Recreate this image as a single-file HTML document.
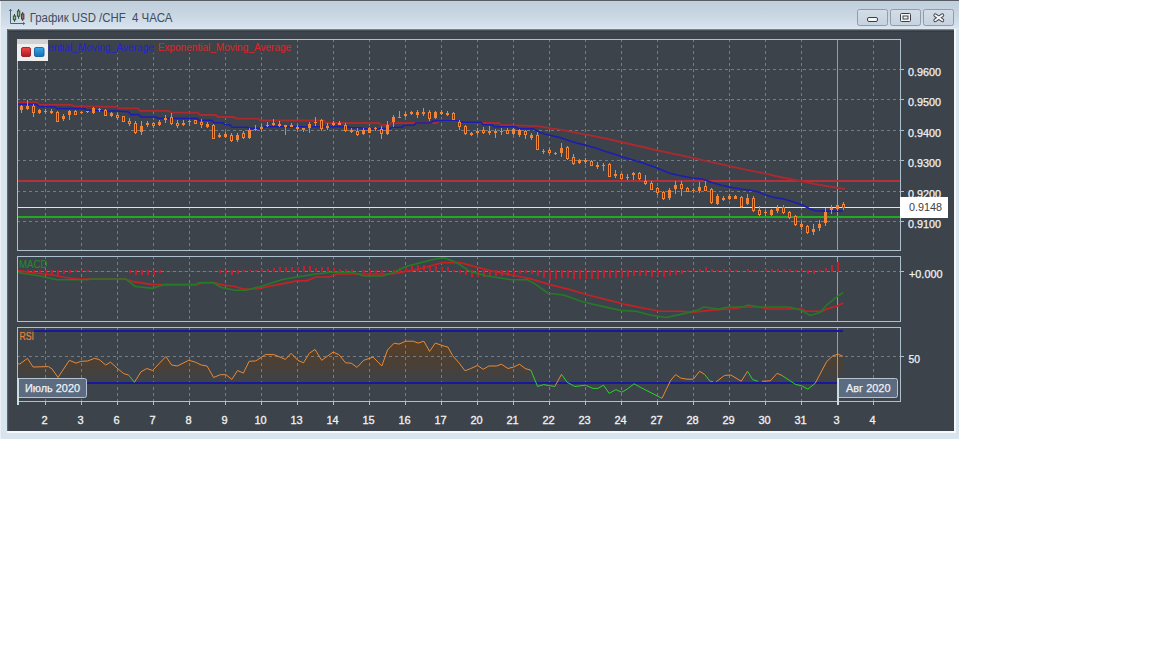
<!DOCTYPE html>
<html><head><meta charset="utf-8"><style>
html,body{margin:0;padding:0;background:#fff;width:1152px;height:648px;overflow:hidden}
svg{position:absolute;left:0;top:0}
text{font-family:"Liberation Sans",sans-serif}
</style></head><body>
<svg width="1152" height="648" viewBox="0 0 1152 648" shape-rendering="crispEdges">
<defs>
<linearGradient id="tb" x1="0" y1="0" x2="0" y2="1">
<stop offset="0" stop-color="#bfcedb"/><stop offset="0.5" stop-color="#c9d7e3"/><stop offset="0.93" stop-color="#d6e3ee"/><stop offset="1" stop-color="#dfe9f1"/>
</linearGradient>
<linearGradient id="btn" x1="0" y1="0" x2="0" y2="1">
<stop offset="0" stop-color="#d3dde7"/><stop offset="1" stop-color="#c6d2de"/>
</linearGradient>
<linearGradient id="rsifill" x1="0" y1="340" x2="0" y2="383" gradientUnits="userSpaceOnUse">
<stop offset="0" stop-color="#5a3e22"/><stop offset="0.55" stop-color="#4a4036"/><stop offset="1" stop-color="#3d4249"/>
</linearGradient>
<linearGradient id="redsq" x1="0" y1="0" x2="0" y2="1">
<stop offset="0" stop-color="#f04848"/><stop offset="1" stop-color="#b01820"/>
</linearGradient>
<linearGradient id="bluesq" x1="0" y1="0" x2="0" y2="1">
<stop offset="0" stop-color="#38a8e8"/><stop offset="1" stop-color="#1070b8"/>
</linearGradient>
<clipPath id="mainclip"><rect x="18" y="40" width="882" height="210"/></clipPath>
<clipPath id="macdclip"><rect x="18" y="257" width="882" height="64"/></clipPath>
<clipPath id="rsiclip"><rect x="18" y="328" width="882" height="73"/></clipPath>
</defs>

<rect x="0" y="0" width="959" height="439" fill="#d8e4ee"/>
<rect x="0" y="1" width="959" height="28" fill="url(#tb)"/>
<rect x="0" y="0" width="959" height="1" fill="#565c62"/>
<rect x="0" y="1" width="959" height="1" fill="#c8d1da"/>
<rect x="0" y="1" width="1" height="438" fill="#eaf0f5"/>
<rect x="7" y="429" width="949" height="4" fill="#f6f9fb"/>
<rect x="954" y="29" width="2" height="404" fill="#f6f9fb"/>
<rect x="7" y="29" width="947" height="402" fill="#3c434b"/>
<rect x="7" y="29" width="947" height="1" fill="#7c828a"/>
<rect x="7" y="30" width="947" height="1" fill="#4a5057"/>
<rect x="7" y="31" width="947" height="1" fill="#363b42"/>
<rect x="7" y="29" width="1" height="402" fill="#5e646c"/>
<rect x="8" y="30" width="1" height="401" fill="#42484f"/>
<g shape-rendering="geometricPrecision" fill="none" stroke="#4d6272" stroke-width="1">
<path d="M10.5 9.5 V23.5 H24.5"/><path d="M9.2 10.8 L10.5 9.3 L11.8 10.8"/><path d="M23.2 22.2 L24.7 23.5 L23.2 24.8"/>
</g>
<g shape-rendering="geometricPrecision" stroke-width="1">
<path d="M14.5 14 V21.8" stroke="#2f4a34"/><rect x="13.3" y="16" width="2.4" height="3.8" fill="#8ab88a" stroke="#2f4a34" stroke-width="0.9"/>
<path d="M18.6 9 V18.8" stroke="#2f4a34"/><rect x="17.4" y="11" width="2.4" height="5.2" fill="#8ab88a" stroke="#2f4a34" stroke-width="0.9"/>
<path d="M22.7 12 V21" stroke="#3e3238"/><rect x="21.5" y="14" width="2.4" height="5" fill="#a07070" stroke="#3e3238" stroke-width="0.9"/>
</g>
<text x="29.7" y="21.6" font-size="12" fill="#434c5c" textLength="96" lengthAdjust="spacingAndGlyphs">График USD /CHF</text>
<text x="132" y="21.6" font-size="12" fill="#434c5c" textLength="40.5" lengthAdjust="spacingAndGlyphs">4 ЧАСА</text>
<rect x="857.5" y="9.5" width="30" height="16" rx="2" ry="2" fill="url(#btn)" stroke="#8e9cab" stroke-width="1" shape-rendering="geometricPrecision"/>
<rect x="890.5" y="9.5" width="30" height="16" rx="2" ry="2" fill="url(#btn)" stroke="#8e9cab" stroke-width="1" shape-rendering="geometricPrecision"/>
<rect x="923.5" y="9.5" width="30" height="16" rx="2" ry="2" fill="url(#btn)" stroke="#8e9cab" stroke-width="1" shape-rendering="geometricPrecision"/>
<g shape-rendering="geometricPrecision">
<rect x="867.5" y="17.5" width="10" height="4" rx="1.5" fill="#f4f6f8" stroke="#3a3f45" stroke-width="1"/>
<rect x="900.5" y="13.5" width="10" height="8" rx="1" fill="#f4f6f8" stroke="#3a3f45" stroke-width="1"/>
<rect x="903" y="16" width="5" height="3" fill="none" stroke="#3a3f45" stroke-width="1"/>
<path d="M935.3 15.3 L942.3 20.3 M942.3 15.3 L935.3 20.3" stroke="#3a3f45" stroke-width="3.8" stroke-linecap="round"/>
<path d="M935.3 15.3 L942.3 20.3 M942.3 15.3 L935.3 20.3" stroke="#f4f6f8" stroke-width="2" stroke-linecap="round"/>
</g>
<line x1="45.5" y1="53" x2="45.5" y2="250" stroke="#737d88" stroke-width="1" stroke-dasharray="3 3" stroke-dashoffset="2"/>
<line x1="81.5" y1="53" x2="81.5" y2="250" stroke="#737d88" stroke-width="1" stroke-dasharray="3 3" stroke-dashoffset="2"/>
<line x1="117.5" y1="53" x2="117.5" y2="250" stroke="#737d88" stroke-width="1" stroke-dasharray="3 3" stroke-dashoffset="2"/>
<line x1="153.5" y1="53" x2="153.5" y2="250" stroke="#737d88" stroke-width="1" stroke-dasharray="3 3" stroke-dashoffset="2"/>
<line x1="189.5" y1="53" x2="189.5" y2="250" stroke="#737d88" stroke-width="1" stroke-dasharray="3 3" stroke-dashoffset="2"/>
<line x1="225.5" y1="53" x2="225.5" y2="250" stroke="#737d88" stroke-width="1" stroke-dasharray="3 3" stroke-dashoffset="2"/>
<line x1="261.5" y1="53" x2="261.5" y2="250" stroke="#737d88" stroke-width="1" stroke-dasharray="3 3" stroke-dashoffset="2"/>
<line x1="297.5" y1="39" x2="297.5" y2="250" stroke="#737d88" stroke-width="1" stroke-dasharray="3 3" stroke-dashoffset="0"/>
<line x1="333.5" y1="39" x2="333.5" y2="250" stroke="#737d88" stroke-width="1" stroke-dasharray="3 3" stroke-dashoffset="0"/>
<line x1="369.5" y1="39" x2="369.5" y2="250" stroke="#737d88" stroke-width="1" stroke-dasharray="3 3" stroke-dashoffset="0"/>
<line x1="405.5" y1="39" x2="405.5" y2="250" stroke="#737d88" stroke-width="1" stroke-dasharray="3 3" stroke-dashoffset="0"/>
<line x1="441.5" y1="39" x2="441.5" y2="250" stroke="#737d88" stroke-width="1" stroke-dasharray="3 3" stroke-dashoffset="0"/>
<line x1="477.5" y1="39" x2="477.5" y2="250" stroke="#737d88" stroke-width="1" stroke-dasharray="3 3" stroke-dashoffset="0"/>
<line x1="513.5" y1="39" x2="513.5" y2="250" stroke="#737d88" stroke-width="1" stroke-dasharray="3 3" stroke-dashoffset="0"/>
<line x1="549.5" y1="39" x2="549.5" y2="250" stroke="#737d88" stroke-width="1" stroke-dasharray="3 3" stroke-dashoffset="0"/>
<line x1="585.5" y1="39" x2="585.5" y2="250" stroke="#737d88" stroke-width="1" stroke-dasharray="3 3" stroke-dashoffset="0"/>
<line x1="621.5" y1="39" x2="621.5" y2="250" stroke="#737d88" stroke-width="1" stroke-dasharray="3 3" stroke-dashoffset="0"/>
<line x1="657.5" y1="39" x2="657.5" y2="250" stroke="#737d88" stroke-width="1" stroke-dasharray="3 3" stroke-dashoffset="0"/>
<line x1="693.5" y1="39" x2="693.5" y2="250" stroke="#737d88" stroke-width="1" stroke-dasharray="3 3" stroke-dashoffset="0"/>
<line x1="729.5" y1="39" x2="729.5" y2="250" stroke="#737d88" stroke-width="1" stroke-dasharray="3 3" stroke-dashoffset="0"/>
<line x1="765.5" y1="39" x2="765.5" y2="250" stroke="#737d88" stroke-width="1" stroke-dasharray="3 3" stroke-dashoffset="0"/>
<line x1="801.5" y1="39" x2="801.5" y2="250" stroke="#737d88" stroke-width="1" stroke-dasharray="3 3" stroke-dashoffset="0"/>
<line x1="837.5" y1="39" x2="837.5" y2="250" stroke="#737d88" stroke-width="1" stroke-dasharray="3 3" stroke-dashoffset="0"/>
<line x1="873.5" y1="39" x2="873.5" y2="250" stroke="#737d88" stroke-width="1" stroke-dasharray="3 3" stroke-dashoffset="0"/>
<line x1="17" y1="69.5" x2="900" y2="69.5" stroke="#737d88" stroke-width="1" stroke-dasharray="3 3"/>
<line x1="17" y1="99.5" x2="900" y2="99.5" stroke="#737d88" stroke-width="1" stroke-dasharray="3 3"/>
<line x1="17" y1="130.5" x2="900" y2="130.5" stroke="#737d88" stroke-width="1" stroke-dasharray="3 3"/>
<line x1="17" y1="160.5" x2="900" y2="160.5" stroke="#737d88" stroke-width="1" stroke-dasharray="3 3"/>
<line x1="17" y1="191.5" x2="900" y2="191.5" stroke="#737d88" stroke-width="1" stroke-dasharray="3 3"/>
<line x1="17" y1="221.5" x2="900" y2="221.5" stroke="#737d88" stroke-width="1" stroke-dasharray="3 3"/>
<line x1="837.5" y1="40" x2="837.5" y2="250" stroke="#8fa0b0" stroke-width="1"/>
<rect x="18" y="180" width="882" height="2" fill="#b4303a"/>
<rect x="18" y="216" width="882" height="2" fill="#22a822"/>
<rect x="18" y="207" width="882" height="1" fill="#e2e2e2"/>
<g clip-path="url(#mainclip)">
<polyline points="17,102.4 37,102.4 39,104.8 72,104.8 74,106.2 117,106.8 119,108.4 138,108.4 140,110.8 169,110.8 171,112.7 198,112.7 200,115 216,115 218,117 234,117 236,118.6 258,118.6 260,120.5 324,120.5 326,123 379,123 381,124.8 389,124.8 391,123 437,123 439,120.5 458,120.5 461,123 499,123 501,124.8 537,126.2 560,129.6 585,134.3 608,139 634,145 660,151 687,156.7 715,162.9 742,168.8 760,172.5 780,177 800,181 820,185 845,189" fill="none" stroke="#aa2a30" stroke-width="1.8" shape-rendering="geometricPrecision" />
<polyline points="17,104.3 37,104.3 39,106.7 55,106.7 57,108.6 84,108.6 86,110 120,111.2 128,111.7 131,114.6 139,114.6 141,117 156,117 158,118.4 197,118.4 199,120.3 212,120.3 214,122.7 223,122.7 225,124.8 230,124.8 232,127.2 247,127.2 249,128.2 263,128.2 265,126.7 348,126.7 350,127.7 361,127.7 363,128.7 390,128.7 392,127.2 402,127.2 404,125.3 414,125.3 416,123 431,123 433,121 440,120.5 458,120.5 462,122.4 481,122.4 483,124.8 492,124.8 494,126.7 516,126.7 518,128.7 533,128.7 540,132.4 549.5,135.3 559,137.2 568.7,140.5 578.2,143.4 587.8,145.8 597.3,148.5 604,151 610.7,153 616.3,154.8 622.8,157 629.3,159 635.7,160.8 642.2,162.7 648.7,165 657.4,168 668.9,173 678.4,175.3 690.8,177.7 702.3,179 711.9,182.5 721.4,185.3 731,187.2 740.5,189 750,190.3 757.6,191.7 765.3,195 773.9,197.4 783.4,199 793,201.7 802.5,205 809.2,208.4 815,210.8 824.5,211.1 842.6,211.1" fill="none" stroke="#1c1eb0" stroke-width="1.6" shape-rendering="geometricPrecision" />
<rect x="21" y="105.3" width="1" height="7.6" fill="#f0853a"/>
<rect x="20" y="106" width="3" height="4" fill="#f0853a"/>
<rect x="27" y="100" width="1" height="10" fill="#f0853a"/>
<rect x="26" y="105.8" width="3" height="3.2" fill="#f0853a"/>
<rect x="33" y="104.3" width="1" height="12.9" fill="#f0853a"/>
<rect x="32" y="105.8" width="3" height="7.6" fill="#f0853a"/>
<rect x="33" y="106.8" width="1" height="5.6" fill="#6e2e18"/>
<rect x="39" y="109" width="1" height="5" fill="#f0853a"/>
<rect x="38" y="110" width="3" height="3" fill="#f0853a"/>
<rect x="45" y="109" width="1" height="5" fill="#f0853a"/>
<rect x="44" y="111" width="3" height="1" fill="#f0853a"/>
<rect x="51" y="109" width="1" height="5" fill="#f0853a"/>
<rect x="50" y="110.5" width="3" height="2.5" fill="#f0853a"/>
<rect x="57" y="110.5" width="1" height="11.5" fill="#f0853a"/>
<rect x="56" y="112" width="3" height="9.5" fill="#f0853a"/>
<rect x="57" y="113" width="1" height="7.5" fill="#6e2e18"/>
<rect x="63" y="114" width="1" height="7" fill="#f0853a"/>
<rect x="62" y="116" width="3" height="3" fill="#f0853a"/>
<rect x="69" y="110" width="1" height="10" fill="#f0853a"/>
<rect x="68" y="110.5" width="3" height="4.3" fill="#f0853a"/>
<rect x="75" y="110" width="1" height="4.8" fill="#f0853a"/>
<rect x="74" y="110.5" width="3" height="4" fill="#f0853a"/>
<rect x="75" y="111.5" width="1" height="2" fill="#6e2e18"/>
<rect x="81" y="110.5" width="1" height="3.5" fill="#f0853a"/>
<rect x="80" y="111.5" width="3" height="1.5" fill="#f0853a"/>
<rect x="87" y="110.5" width="1" height="2.9" fill="#f0853a"/>
<rect x="86" y="111" width="3" height="1" fill="#f0853a"/>
<rect x="93" y="107" width="1" height="7" fill="#f0853a"/>
<rect x="92" y="108" width="3" height="5" fill="#f0853a"/>
<rect x="99" y="107.7" width="1" height="4.3" fill="#f0853a"/>
<rect x="98" y="108.5" width="3" height="1.5" fill="#f0853a"/>
<rect x="105" y="109" width="1" height="7" fill="#f0853a"/>
<rect x="104" y="109.5" width="3" height="6" fill="#f0853a"/>
<rect x="105" y="110.5" width="1" height="4" fill="#6e2e18"/>
<rect x="111" y="112.4" width="1" height="4.3" fill="#f0853a"/>
<rect x="110" y="113" width="3" height="3" fill="#f0853a"/>
<rect x="117" y="113.4" width="1" height="6.2" fill="#f0853a"/>
<rect x="116" y="114.5" width="3" height="3" fill="#f0853a"/>
<rect x="117" y="115.5" width="1" height="1" fill="#6e2e18"/>
<rect x="123" y="115.5" width="1" height="6.5" fill="#f0853a"/>
<rect x="122" y="115.5" width="3" height="6.2" fill="#f0853a"/>
<rect x="123" y="116.5" width="1" height="4.2" fill="#6e2e18"/>
<rect x="129" y="118" width="1" height="7.6" fill="#f0853a"/>
<rect x="128" y="121" width="3" height="2.6" fill="#f0853a"/>
<rect x="129" y="122" width="1" height="0.6" fill="#6e2e18"/>
<rect x="135" y="120.8" width="1" height="12.9" fill="#f0853a"/>
<rect x="134" y="122.7" width="3" height="10.5" fill="#f0853a"/>
<rect x="135" y="123.7" width="1" height="8.5" fill="#6e2e18"/>
<rect x="141" y="120.8" width="1" height="13.8" fill="#f0853a"/>
<rect x="140" y="126" width="3" height="5.8" fill="#f0853a"/>
<rect x="147" y="120.8" width="1" height="6.2" fill="#f0853a"/>
<rect x="146" y="123" width="3" height="2" fill="#f0853a"/>
<rect x="153" y="121.7" width="1" height="5.8" fill="#f0853a"/>
<rect x="152" y="123" width="3" height="3" fill="#f0853a"/>
<rect x="153" y="124" width="1" height="1" fill="#6e2e18"/>
<rect x="159" y="120.3" width="1" height="5.7" fill="#f0853a"/>
<rect x="158" y="122" width="3" height="2.5" fill="#f0853a"/>
<rect x="165" y="115" width="1" height="7.7" fill="#f0853a"/>
<rect x="164" y="117.5" width="3" height="2.5" fill="#f0853a"/>
<rect x="171" y="113" width="1" height="11.6" fill="#f0853a"/>
<rect x="170" y="117.4" width="3" height="6.6" fill="#f0853a"/>
<rect x="171" y="118.4" width="1" height="4.6" fill="#6e2e18"/>
<rect x="177" y="120.3" width="1" height="7.7" fill="#f0853a"/>
<rect x="176" y="122.7" width="3" height="3.3" fill="#f0853a"/>
<rect x="177" y="123.7" width="1" height="1.3" fill="#6e2e18"/>
<rect x="183" y="120.3" width="1" height="5.7" fill="#f0853a"/>
<rect x="182" y="123" width="3" height="1.5" fill="#f0853a"/>
<rect x="189" y="119.8" width="1" height="5.8" fill="#f0853a"/>
<rect x="188" y="120.5" width="3" height="1" fill="#f0853a"/>
<rect x="195" y="119.8" width="1" height="4.2" fill="#f0853a"/>
<rect x="194" y="120.3" width="3" height="3.2" fill="#f0853a"/>
<rect x="195" y="121.3" width="1" height="1.2" fill="#6e2e18"/>
<rect x="201" y="119.4" width="1" height="8.6" fill="#f0853a"/>
<rect x="200" y="122" width="3" height="3" fill="#f0853a"/>
<rect x="201" y="123" width="1" height="1" fill="#6e2e18"/>
<rect x="207" y="122.2" width="1" height="5.8" fill="#f0853a"/>
<rect x="206" y="123.5" width="3" height="3.5" fill="#f0853a"/>
<rect x="213" y="124" width="1" height="15" fill="#f0853a"/>
<rect x="212" y="124.6" width="3" height="13.9" fill="#f0853a"/>
<rect x="213" y="125.6" width="1" height="11.9" fill="#6e2e18"/>
<rect x="219" y="133" width="1" height="5" fill="#f0853a"/>
<rect x="218" y="134.6" width="3" height="2.4" fill="#f0853a"/>
<rect x="225" y="132" width="1" height="6" fill="#f0853a"/>
<rect x="224" y="133.7" width="3" height="2.8" fill="#f0853a"/>
<rect x="231" y="133" width="1" height="9" fill="#f0853a"/>
<rect x="230" y="135.3" width="3" height="5.3" fill="#f0853a"/>
<rect x="231" y="136.3" width="1" height="3.3" fill="#6e2e18"/>
<rect x="237" y="133" width="1" height="9" fill="#f0853a"/>
<rect x="236" y="134.9" width="3" height="5.1" fill="#f0853a"/>
<rect x="243" y="131" width="1" height="7.7" fill="#f0853a"/>
<rect x="242" y="133.4" width="3" height="4.8" fill="#f0853a"/>
<rect x="243" y="134.4" width="1" height="2.8" fill="#6e2e18"/>
<rect x="249" y="127.7" width="1" height="11.3" fill="#f0853a"/>
<rect x="248" y="129.6" width="3" height="8.1" fill="#f0853a"/>
<rect x="255" y="125.3" width="1" height="5.7" fill="#f0853a"/>
<rect x="254" y="128.5" width="3" height="1.5" fill="#f0853a"/>
<rect x="261" y="124.4" width="1" height="7.1" fill="#f0853a"/>
<rect x="260" y="127" width="3" height="1.7" fill="#f0853a"/>
<rect x="267" y="122" width="1" height="4.7" fill="#f0853a"/>
<rect x="266" y="124.5" width="3" height="1.5" fill="#f0853a"/>
<rect x="273" y="119" width="1" height="6.8" fill="#f0853a"/>
<rect x="272" y="122.5" width="3" height="2" fill="#f0853a"/>
<rect x="279" y="121" width="1" height="6.2" fill="#f0853a"/>
<rect x="278" y="123.5" width="3" height="2" fill="#f0853a"/>
<rect x="285" y="125.3" width="1" height="9.6" fill="#f0853a"/>
<rect x="284" y="125.3" width="3" height="1.4" fill="#f0853a"/>
<rect x="291" y="123.4" width="1" height="3.6" fill="#f0853a"/>
<rect x="290" y="125.3" width="3" height="1.4" fill="#f0853a"/>
<rect x="297" y="125.3" width="1" height="6.2" fill="#f0853a"/>
<rect x="296" y="127" width="3" height="1.5" fill="#f0853a"/>
<rect x="303" y="128" width="1" height="3.5" fill="#f0853a"/>
<rect x="302" y="128" width="3" height="1.5" fill="#f0853a"/>
<rect x="309" y="122.4" width="1" height="10.6" fill="#f0853a"/>
<rect x="308" y="124.4" width="3" height="3.6" fill="#f0853a"/>
<rect x="315" y="117" width="1" height="8.8" fill="#f0853a"/>
<rect x="314" y="121.5" width="3" height="1.5" fill="#f0853a"/>
<rect x="321" y="119" width="1" height="11.6" fill="#f0853a"/>
<rect x="320" y="119.6" width="3" height="9.1" fill="#f0853a"/>
<rect x="321" y="120.6" width="1" height="7.1" fill="#6e2e18"/>
<rect x="327" y="123" width="1" height="7" fill="#f0853a"/>
<rect x="326" y="126" width="3" height="2" fill="#f0853a"/>
<rect x="333" y="121" width="1" height="4.8" fill="#f0853a"/>
<rect x="332" y="123" width="3" height="2" fill="#f0853a"/>
<rect x="339" y="121" width="1" height="4" fill="#f0853a"/>
<rect x="338" y="122.5" width="3" height="2" fill="#f0853a"/>
<rect x="345" y="123" width="1" height="9" fill="#f0853a"/>
<rect x="344" y="124.8" width="3" height="6.2" fill="#f0853a"/>
<rect x="345" y="125.8" width="1" height="4.2" fill="#6e2e18"/>
<rect x="351" y="127.7" width="1" height="5.3" fill="#f0853a"/>
<rect x="350" y="129.5" width="3" height="2" fill="#f0853a"/>
<rect x="357" y="128" width="1" height="8.3" fill="#f0853a"/>
<rect x="356" y="130.6" width="3" height="4.7" fill="#f0853a"/>
<rect x="357" y="131.6" width="1" height="2.7" fill="#6e2e18"/>
<rect x="363" y="127.7" width="1" height="7.2" fill="#f0853a"/>
<rect x="362" y="129.6" width="3" height="4.4" fill="#f0853a"/>
<rect x="369" y="127" width="1" height="6" fill="#f0853a"/>
<rect x="368" y="128" width="3" height="4.5" fill="#f0853a"/>
<rect x="375" y="126.7" width="1" height="4.3" fill="#f0853a"/>
<rect x="374" y="127.5" width="3" height="1.5" fill="#f0853a"/>
<rect x="381" y="126" width="1" height="12.7" fill="#f0853a"/>
<rect x="380" y="128.7" width="3" height="5.3" fill="#f0853a"/>
<rect x="381" y="129.7" width="1" height="3.3" fill="#6e2e18"/>
<rect x="387" y="121" width="1" height="13.9" fill="#f0853a"/>
<rect x="386" y="124.8" width="3" height="9.2" fill="#f0853a"/>
<rect x="393" y="115.3" width="1" height="11.4" fill="#f0853a"/>
<rect x="392" y="116.7" width="3" height="5.7" fill="#f0853a"/>
<rect x="399" y="111" width="1" height="7" fill="#f0853a"/>
<rect x="398" y="116.5" width="3" height="1.5" fill="#f0853a"/>
<rect x="405" y="112" width="1" height="4.7" fill="#f0853a"/>
<rect x="404" y="114" width="3" height="1.5" fill="#f0853a"/>
<rect x="411" y="110.5" width="1" height="4.3" fill="#f0853a"/>
<rect x="410" y="111.5" width="3" height="2.5" fill="#f0853a"/>
<rect x="417" y="109.6" width="1" height="8.4" fill="#f0853a"/>
<rect x="416" y="112.4" width="3" height="2.9" fill="#f0853a"/>
<rect x="423" y="108" width="1" height="7.8" fill="#f0853a"/>
<rect x="422" y="112" width="3" height="2" fill="#f0853a"/>
<rect x="429" y="110" width="1" height="10.5" fill="#f0853a"/>
<rect x="428" y="111.5" width="3" height="7.5" fill="#f0853a"/>
<rect x="429" y="112.5" width="1" height="5.5" fill="#6e2e18"/>
<rect x="435" y="111" width="1" height="8" fill="#f0853a"/>
<rect x="434" y="112.4" width="3" height="5.6" fill="#f0853a"/>
<rect x="441" y="109.6" width="1" height="5.7" fill="#f0853a"/>
<rect x="440" y="111.5" width="3" height="2" fill="#f0853a"/>
<rect x="447" y="111" width="1" height="4.8" fill="#f0853a"/>
<rect x="446" y="112.5" width="3" height="2" fill="#f0853a"/>
<rect x="453" y="112" width="1" height="8" fill="#f0853a"/>
<rect x="452" y="113.4" width="3" height="6.2" fill="#f0853a"/>
<rect x="453" y="114.4" width="1" height="4.2" fill="#6e2e18"/>
<rect x="459" y="120" width="1" height="10" fill="#f0853a"/>
<rect x="458" y="122" width="3" height="5.2" fill="#f0853a"/>
<rect x="459" y="123" width="1" height="3.2" fill="#6e2e18"/>
<rect x="465" y="125.3" width="1" height="9.6" fill="#f0853a"/>
<rect x="464" y="126.3" width="3" height="7.7" fill="#f0853a"/>
<rect x="465" y="127.3" width="1" height="5.7" fill="#6e2e18"/>
<rect x="471" y="132" width="1" height="3.8" fill="#f0853a"/>
<rect x="470" y="133" width="3" height="1.5" fill="#f0853a"/>
<rect x="477" y="128" width="1" height="7.3" fill="#f0853a"/>
<rect x="476" y="130.5" width="3" height="2.5" fill="#f0853a"/>
<rect x="483" y="127.2" width="1" height="6.8" fill="#f0853a"/>
<rect x="482" y="130" width="3" height="3.4" fill="#f0853a"/>
<rect x="483" y="131" width="1" height="1.4" fill="#6e2e18"/>
<rect x="489" y="126.3" width="1" height="8.6" fill="#f0853a"/>
<rect x="488" y="130.5" width="3" height="2" fill="#f0853a"/>
<rect x="495" y="128.7" width="1" height="9" fill="#f0853a"/>
<rect x="494" y="130.5" width="3" height="2.5" fill="#f0853a"/>
<rect x="501" y="128" width="1" height="6.9" fill="#f0853a"/>
<rect x="500" y="130.5" width="3" height="1.5" fill="#f0853a"/>
<rect x="507" y="128" width="1" height="6" fill="#f0853a"/>
<rect x="506" y="129.5" width="3" height="4" fill="#f0853a"/>
<rect x="507" y="130.5" width="1" height="2" fill="#6e2e18"/>
<rect x="513" y="127.7" width="1" height="7.6" fill="#f0853a"/>
<rect x="512" y="128.5" width="3" height="5.5" fill="#f0853a"/>
<rect x="519" y="129" width="1" height="7.8" fill="#f0853a"/>
<rect x="518" y="130" width="3" height="5" fill="#f0853a"/>
<rect x="525" y="130" width="1" height="8.7" fill="#f0853a"/>
<rect x="524" y="131" width="3" height="3.5" fill="#f0853a"/>
<rect x="525" y="132" width="1" height="1.5" fill="#6e2e18"/>
<rect x="531" y="133" width="1" height="6.6" fill="#f0853a"/>
<rect x="530" y="134.5" width="3" height="3" fill="#f0853a"/>
<rect x="537" y="132" width="1" height="18" fill="#f0853a"/>
<rect x="536" y="134.9" width="3" height="14.6" fill="#f0853a"/>
<rect x="537" y="135.9" width="1" height="12.6" fill="#6e2e18"/>
<rect x="543" y="148.7" width="1" height="5.3" fill="#f0853a"/>
<rect x="542" y="151" width="3" height="1" fill="#f0853a"/>
<rect x="549" y="148" width="1" height="6" fill="#f0853a"/>
<rect x="548" y="150" width="3" height="3" fill="#f0853a"/>
<rect x="549" y="151" width="1" height="1" fill="#6e2e18"/>
<rect x="555" y="151.5" width="1" height="3.5" fill="#f0853a"/>
<rect x="554" y="152.5" width="3" height="1.5" fill="#f0853a"/>
<rect x="561" y="143" width="1" height="13.8" fill="#f0853a"/>
<rect x="560" y="147.7" width="3" height="5.3" fill="#f0853a"/>
<rect x="567" y="145.8" width="1" height="13.8" fill="#f0853a"/>
<rect x="566" y="146.7" width="3" height="12" fill="#f0853a"/>
<rect x="567" y="147.7" width="1" height="10" fill="#6e2e18"/>
<rect x="573" y="154" width="1" height="11" fill="#f0853a"/>
<rect x="572" y="156.8" width="3" height="7.2" fill="#f0853a"/>
<rect x="573" y="157.8" width="1" height="5.2" fill="#6e2e18"/>
<rect x="579" y="158.7" width="1" height="5.3" fill="#f0853a"/>
<rect x="578" y="159.5" width="3" height="3.5" fill="#f0853a"/>
<rect x="585" y="157.7" width="1" height="6.3" fill="#f0853a"/>
<rect x="584" y="160" width="3" height="2" fill="#f0853a"/>
<rect x="591" y="160" width="1" height="6.3" fill="#f0853a"/>
<rect x="590" y="160.5" width="3" height="5.5" fill="#f0853a"/>
<rect x="591" y="161.5" width="1" height="3.5" fill="#6e2e18"/>
<rect x="597" y="162" width="1" height="6.7" fill="#f0853a"/>
<rect x="596" y="164.5" width="3" height="2" fill="#f0853a"/>
<rect x="603" y="163" width="1" height="7.5" fill="#f0853a"/>
<rect x="602" y="164.5" width="3" height="1.5" fill="#f0853a"/>
<rect x="609" y="163" width="1" height="14" fill="#f0853a"/>
<rect x="608" y="163.6" width="3" height="13" fill="#f0853a"/>
<rect x="609" y="164.6" width="1" height="11" fill="#6e2e18"/>
<rect x="615" y="170" width="1" height="7.5" fill="#f0853a"/>
<rect x="614" y="174" width="3" height="1.5" fill="#f0853a"/>
<rect x="621" y="172.9" width="1" height="6.5" fill="#f0853a"/>
<rect x="620" y="173.5" width="3" height="5.5" fill="#f0853a"/>
<rect x="621" y="174.5" width="1" height="3.5" fill="#6e2e18"/>
<rect x="627" y="174" width="1" height="5.8" fill="#f0853a"/>
<rect x="626" y="176.5" width="3" height="1" fill="#f0853a"/>
<rect x="633" y="171.5" width="1" height="8.3" fill="#f0853a"/>
<rect x="632" y="173.3" width="3" height="1.7" fill="#f0853a"/>
<rect x="639" y="172" width="1" height="7.8" fill="#f0853a"/>
<rect x="638" y="172.5" width="3" height="6.8" fill="#f0853a"/>
<rect x="639" y="173.5" width="1" height="4.8" fill="#6e2e18"/>
<rect x="645" y="175" width="1" height="10.4" fill="#f0853a"/>
<rect x="644" y="180.7" width="3" height="2.8" fill="#f0853a"/>
<rect x="645" y="181.7" width="1" height="0.8" fill="#6e2e18"/>
<rect x="651" y="180.7" width="1" height="9.3" fill="#f0853a"/>
<rect x="650" y="183" width="3" height="6.6" fill="#f0853a"/>
<rect x="651" y="184" width="1" height="4.6" fill="#6e2e18"/>
<rect x="657" y="186.8" width="1" height="7.8" fill="#f0853a"/>
<rect x="656" y="187.7" width="3" height="5.3" fill="#f0853a"/>
<rect x="657" y="188.7" width="1" height="3.3" fill="#6e2e18"/>
<rect x="663" y="191" width="1" height="8.7" fill="#f0853a"/>
<rect x="662" y="192" width="3" height="7" fill="#f0853a"/>
<rect x="663" y="193" width="1" height="5" fill="#6e2e18"/>
<rect x="669" y="188" width="1" height="11.7" fill="#f0853a"/>
<rect x="668" y="190" width="3" height="7.8" fill="#f0853a"/>
<rect x="675" y="181" width="1" height="13" fill="#f0853a"/>
<rect x="674" y="184.9" width="3" height="3.8" fill="#f0853a"/>
<rect x="681" y="181" width="1" height="14.8" fill="#f0853a"/>
<rect x="680" y="184" width="3" height="4.7" fill="#f0853a"/>
<rect x="681" y="185" width="1" height="2.7" fill="#6e2e18"/>
<rect x="687" y="187" width="1" height="5" fill="#f0853a"/>
<rect x="686" y="188" width="3" height="3.5" fill="#f0853a"/>
<rect x="687" y="189" width="1" height="1.5" fill="#6e2e18"/>
<rect x="693" y="188" width="1" height="5" fill="#f0853a"/>
<rect x="692" y="190" width="3" height="1" fill="#f0853a"/>
<rect x="699" y="182" width="1" height="11" fill="#f0853a"/>
<rect x="698" y="186.8" width="3" height="3.8" fill="#f0853a"/>
<rect x="705" y="181" width="1" height="9.6" fill="#f0853a"/>
<rect x="704" y="185.8" width="3" height="4.8" fill="#f0853a"/>
<rect x="705" y="186.8" width="1" height="2.8" fill="#6e2e18"/>
<rect x="711" y="188" width="1" height="16" fill="#f0853a"/>
<rect x="710" y="189" width="3" height="14" fill="#f0853a"/>
<rect x="711" y="190" width="1" height="12" fill="#6e2e18"/>
<rect x="717" y="194.4" width="1" height="10.6" fill="#f0853a"/>
<rect x="716" y="196" width="3" height="8" fill="#f0853a"/>
<rect x="723" y="196" width="1" height="5" fill="#f0853a"/>
<rect x="722" y="198" width="3" height="2" fill="#f0853a"/>
<rect x="729" y="194.4" width="1" height="5.6" fill="#f0853a"/>
<rect x="728" y="195.5" width="3" height="3.5" fill="#f0853a"/>
<rect x="735" y="195" width="1" height="4" fill="#f0853a"/>
<rect x="734" y="196" width="3" height="2.5" fill="#f0853a"/>
<rect x="741" y="196" width="1" height="12" fill="#f0853a"/>
<rect x="740" y="197" width="3" height="10" fill="#f0853a"/>
<rect x="741" y="198" width="1" height="8" fill="#6e2e18"/>
<rect x="747" y="194.4" width="1" height="10.6" fill="#f0853a"/>
<rect x="746" y="198" width="3" height="6" fill="#f0853a"/>
<rect x="753" y="196" width="1" height="15.8" fill="#f0853a"/>
<rect x="752" y="198" width="3" height="13.3" fill="#f0853a"/>
<rect x="753" y="199" width="1" height="11.3" fill="#6e2e18"/>
<rect x="759" y="206" width="1" height="9.6" fill="#f0853a"/>
<rect x="758" y="209.9" width="3" height="4.7" fill="#f0853a"/>
<rect x="759" y="210.9" width="1" height="2.7" fill="#6e2e18"/>
<rect x="765" y="210" width="1" height="5.6" fill="#f0853a"/>
<rect x="764" y="212" width="3" height="1" fill="#f0853a"/>
<rect x="771" y="209" width="1" height="6.6" fill="#f0853a"/>
<rect x="770" y="210" width="3" height="5" fill="#f0853a"/>
<rect x="777" y="205" width="1" height="7.7" fill="#f0853a"/>
<rect x="776" y="208" width="3" height="3.3" fill="#f0853a"/>
<rect x="783" y="205" width="1" height="8.7" fill="#f0853a"/>
<rect x="782" y="207" width="3" height="6.2" fill="#f0853a"/>
<rect x="783" y="208" width="1" height="4.2" fill="#6e2e18"/>
<rect x="789" y="210.8" width="1" height="8.2" fill="#f0853a"/>
<rect x="788" y="211.8" width="3" height="5.7" fill="#f0853a"/>
<rect x="789" y="212.8" width="1" height="3.7" fill="#6e2e18"/>
<rect x="795" y="215" width="1" height="10.6" fill="#f0853a"/>
<rect x="794" y="216" width="3" height="9" fill="#f0853a"/>
<rect x="795" y="217" width="1" height="7" fill="#6e2e18"/>
<rect x="801" y="220.8" width="1" height="9.2" fill="#f0853a"/>
<rect x="800" y="223.7" width="3" height="3.3" fill="#f0853a"/>
<rect x="807" y="224.7" width="1" height="9" fill="#f0853a"/>
<rect x="806" y="225.5" width="3" height="7.5" fill="#f0853a"/>
<rect x="807" y="226.5" width="1" height="5.5" fill="#6e2e18"/>
<rect x="813" y="223.7" width="1" height="11.3" fill="#f0853a"/>
<rect x="812" y="229" width="3" height="3.3" fill="#f0853a"/>
<rect x="819" y="220" width="1" height="10.9" fill="#f0853a"/>
<rect x="818" y="223.7" width="3" height="4.3" fill="#f0853a"/>
<rect x="825" y="208" width="1" height="17.6" fill="#f0853a"/>
<rect x="824" y="212" width="3" height="10.8" fill="#f0853a"/>
<rect x="831" y="205" width="1" height="9" fill="#f0853a"/>
<rect x="830" y="207.5" width="3" height="2.8" fill="#f0853a"/>
<rect x="837" y="199.8" width="1" height="11" fill="#f0853a"/>
<rect x="836" y="204.6" width="3" height="4.8" fill="#f0853a"/>
<rect x="843" y="202" width="1" height="8" fill="#f0853a"/>
<rect x="842" y="204" width="3" height="4" fill="#f0853a"/>
<rect x="843" y="205" width="1" height="2" fill="#6e2e18"/>
</g>
<rect x="17.5" y="39.5" width="883" height="211" fill="none" stroke="#aebfce" stroke-width="1.2"/>
<rect x="900" y="69" width="4" height="1" fill="#aebfce"/>
<text x="908" y="76" font-size="10.5" fill="#f2f2f2" stroke="#f2f2f2" stroke-width="0.25" textLength="33" lengthAdjust="spacingAndGlyphs">0.9600</text>
<rect x="900" y="99" width="4" height="1" fill="#aebfce"/>
<text x="908" y="106" font-size="10.5" fill="#f2f2f2" stroke="#f2f2f2" stroke-width="0.25" textLength="33" lengthAdjust="spacingAndGlyphs">0.9500</text>
<rect x="900" y="130" width="4" height="1" fill="#aebfce"/>
<text x="908" y="137" font-size="10.5" fill="#f2f2f2" stroke="#f2f2f2" stroke-width="0.25" textLength="33" lengthAdjust="spacingAndGlyphs">0.9400</text>
<rect x="900" y="160" width="4" height="1" fill="#aebfce"/>
<text x="908" y="167" font-size="10.5" fill="#f2f2f2" stroke="#f2f2f2" stroke-width="0.25" textLength="33" lengthAdjust="spacingAndGlyphs">0.9300</text>
<rect x="900" y="191" width="4" height="1" fill="#aebfce"/>
<text x="908" y="198" font-size="10.5" fill="#f2f2f2" stroke="#f2f2f2" stroke-width="0.25" textLength="33" lengthAdjust="spacingAndGlyphs">0.9200</text>
<rect x="900" y="221" width="4" height="1" fill="#aebfce"/>
<text x="908" y="228" font-size="10.5" fill="#f2f2f2" stroke="#f2f2f2" stroke-width="0.25" textLength="33" lengthAdjust="spacingAndGlyphs">0.9100</text>
<rect x="900" y="197" width="48" height="21" fill="#ffffff"/>
<text x="909" y="211" font-size="11.5" fill="#3c4048" textLength="33" lengthAdjust="spacingAndGlyphs">0.9148</text>
<rect x="17" y="39" width="31" height="22" fill="#efefef"/>
<rect x="17" y="39" width="31" height="4.5" fill="#d2d2d2"/>
<rect x="21.5" y="47.5" width="9" height="9" rx="1.5" fill="url(#redsq)" stroke="#8a1018" stroke-width="0.8" shape-rendering="geometricPrecision"/>
<rect x="34.5" y="47.5" width="9.5" height="9" rx="1.5" fill="url(#bluesq)" stroke="#0a5090" stroke-width="0.8" shape-rendering="geometricPrecision"/>
<text x="48" y="51.4" font-size="11" fill="#2424cc" textLength="106" lengthAdjust="spacingAndGlyphs">ential_Moving_Average</text>
<text x="157.7" y="51.4" font-size="11" fill="#e02424" textLength="133.5" lengthAdjust="spacingAndGlyphs">Exponential_Moving_Average</text>
<line x1="45.5" y1="256" x2="45.5" y2="321" stroke="#737d88" stroke-width="1" stroke-dasharray="3 3" stroke-dashoffset="0"/>
<line x1="81.5" y1="256" x2="81.5" y2="321" stroke="#737d88" stroke-width="1" stroke-dasharray="3 3" stroke-dashoffset="0"/>
<line x1="117.5" y1="256" x2="117.5" y2="321" stroke="#737d88" stroke-width="1" stroke-dasharray="3 3" stroke-dashoffset="0"/>
<line x1="153.5" y1="256" x2="153.5" y2="321" stroke="#737d88" stroke-width="1" stroke-dasharray="3 3" stroke-dashoffset="0"/>
<line x1="189.5" y1="256" x2="189.5" y2="321" stroke="#737d88" stroke-width="1" stroke-dasharray="3 3" stroke-dashoffset="0"/>
<line x1="225.5" y1="256" x2="225.5" y2="321" stroke="#737d88" stroke-width="1" stroke-dasharray="3 3" stroke-dashoffset="0"/>
<line x1="261.5" y1="256" x2="261.5" y2="321" stroke="#737d88" stroke-width="1" stroke-dasharray="3 3" stroke-dashoffset="0"/>
<line x1="297.5" y1="256" x2="297.5" y2="321" stroke="#737d88" stroke-width="1" stroke-dasharray="3 3" stroke-dashoffset="0"/>
<line x1="333.5" y1="256" x2="333.5" y2="321" stroke="#737d88" stroke-width="1" stroke-dasharray="3 3" stroke-dashoffset="0"/>
<line x1="369.5" y1="256" x2="369.5" y2="321" stroke="#737d88" stroke-width="1" stroke-dasharray="3 3" stroke-dashoffset="0"/>
<line x1="405.5" y1="256" x2="405.5" y2="321" stroke="#737d88" stroke-width="1" stroke-dasharray="3 3" stroke-dashoffset="0"/>
<line x1="441.5" y1="256" x2="441.5" y2="321" stroke="#737d88" stroke-width="1" stroke-dasharray="3 3" stroke-dashoffset="0"/>
<line x1="477.5" y1="256" x2="477.5" y2="321" stroke="#737d88" stroke-width="1" stroke-dasharray="3 3" stroke-dashoffset="0"/>
<line x1="513.5" y1="256" x2="513.5" y2="321" stroke="#737d88" stroke-width="1" stroke-dasharray="3 3" stroke-dashoffset="0"/>
<line x1="549.5" y1="256" x2="549.5" y2="321" stroke="#737d88" stroke-width="1" stroke-dasharray="3 3" stroke-dashoffset="0"/>
<line x1="585.5" y1="256" x2="585.5" y2="321" stroke="#737d88" stroke-width="1" stroke-dasharray="3 3" stroke-dashoffset="0"/>
<line x1="621.5" y1="256" x2="621.5" y2="321" stroke="#737d88" stroke-width="1" stroke-dasharray="3 3" stroke-dashoffset="0"/>
<line x1="657.5" y1="256" x2="657.5" y2="321" stroke="#737d88" stroke-width="1" stroke-dasharray="3 3" stroke-dashoffset="0"/>
<line x1="693.5" y1="256" x2="693.5" y2="321" stroke="#737d88" stroke-width="1" stroke-dasharray="3 3" stroke-dashoffset="0"/>
<line x1="729.5" y1="256" x2="729.5" y2="321" stroke="#737d88" stroke-width="1" stroke-dasharray="3 3" stroke-dashoffset="0"/>
<line x1="765.5" y1="256" x2="765.5" y2="321" stroke="#737d88" stroke-width="1" stroke-dasharray="3 3" stroke-dashoffset="0"/>
<line x1="801.5" y1="256" x2="801.5" y2="321" stroke="#737d88" stroke-width="1" stroke-dasharray="3 3" stroke-dashoffset="0"/>
<line x1="837.5" y1="256" x2="837.5" y2="321" stroke="#737d88" stroke-width="1" stroke-dasharray="3 3" stroke-dashoffset="0"/>
<line x1="873.5" y1="256" x2="873.5" y2="321" stroke="#737d88" stroke-width="1" stroke-dasharray="3 3" stroke-dashoffset="0"/>
<line x1="17" y1="271.5" x2="900" y2="271.5" stroke="#737d88" stroke-width="1" stroke-dasharray="3 3"/>
<line x1="837.5" y1="257" x2="837.5" y2="321" stroke="#8fa0b0" stroke-width="1"/>
<g clip-path="url(#macdclip)">
<rect x="21" y="270" width="2" height="2.93" fill="#c02030"/>
<rect x="27" y="270" width="2" height="3.04" fill="#c02030"/>
<rect x="33" y="270" width="2" height="3.15" fill="#c02030"/>
<rect x="39" y="270" width="2" height="3.45" fill="#c02030"/>
<rect x="45" y="270" width="2" height="4.1" fill="#c02030"/>
<rect x="51" y="270" width="2" height="4.76" fill="#c02030"/>
<rect x="57" y="270" width="2" height="4.88" fill="#c02030"/>
<rect x="63" y="270" width="2" height="3.75" fill="#c02030"/>
<rect x="69" y="270" width="2" height="2.89" fill="#c02030"/>
<rect x="75" y="270" width="2" height="2.03" fill="#c02030"/>
<rect x="81" y="270" width="2" height="1.96" fill="#c02030"/>
<rect x="87" y="270" width="2" height="1.96" fill="#c02030"/>
<rect x="93" y="270.8" width="2" height="1.2" fill="#c02030"/>
<rect x="99" y="270.8" width="2" height="1.2" fill="#c02030"/>
<rect x="105" y="270.8" width="2" height="1.2" fill="#c02030"/>
<rect x="111" y="270.8" width="2" height="1.2" fill="#c02030"/>
<rect x="117" y="270.8" width="2" height="1.2" fill="#c02030"/>
<rect x="123" y="270.8" width="2" height="1.2" fill="#c02030"/>
<rect x="129" y="270" width="2" height="2.73" fill="#c02030"/>
<rect x="135" y="270" width="2" height="5.48" fill="#c02030"/>
<rect x="141" y="270" width="2" height="5.24" fill="#c02030"/>
<rect x="147" y="270" width="2" height="5.01" fill="#c02030"/>
<rect x="153" y="270" width="2" height="4.5" fill="#c02030"/>
<rect x="159" y="270" width="2" height="2.61" fill="#c02030"/>
<rect x="165" y="270.8" width="2" height="1.2" fill="#c02030"/>
<rect x="171" y="270.8" width="2" height="1.2" fill="#c02030"/>
<rect x="177" y="270.8" width="2" height="1.2" fill="#c02030"/>
<rect x="183" y="270.8" width="2" height="1.2" fill="#c02030"/>
<rect x="189" y="270.8" width="2" height="1.2" fill="#c02030"/>
<rect x="195" y="270.8" width="2" height="1.2" fill="#c02030"/>
<rect x="201" y="270.64" width="2" height="1.36" fill="#c02030"/>
<rect x="207" y="270.8" width="2" height="1.2" fill="#c02030"/>
<rect x="213" y="270.8" width="2" height="1.2" fill="#c02030"/>
<rect x="219" y="270" width="2" height="3.31" fill="#c02030"/>
<rect x="225" y="270" width="2" height="4.22" fill="#c02030"/>
<rect x="231" y="270" width="2" height="4.61" fill="#c02030"/>
<rect x="237" y="270" width="2" height="4.03" fill="#c02030"/>
<rect x="243" y="270" width="2" height="2.44" fill="#c02030"/>
<rect x="249" y="270" width="2" height="1.44" fill="#c02030"/>
<rect x="255" y="269.63" width="2" height="2.37" fill="#c02030"/>
<rect x="261" y="269.14" width="2" height="2.86" fill="#c02030"/>
<rect x="267" y="268.56" width="2" height="3.44" fill="#c02030"/>
<rect x="273" y="267.84" width="2" height="4.16" fill="#c02030"/>
<rect x="279" y="267.11" width="2" height="4.89" fill="#c02030"/>
<rect x="285" y="266.91" width="2" height="5.09" fill="#c02030"/>
<rect x="291" y="267.06" width="2" height="4.94" fill="#c02030"/>
<rect x="297" y="267.09" width="2" height="4.91" fill="#c02030"/>
<rect x="303" y="266.2" width="2" height="5.8" fill="#c02030"/>
<rect x="309" y="266.47" width="2" height="5.53" fill="#c02030"/>
<rect x="315" y="267.84" width="2" height="4.16" fill="#c02030"/>
<rect x="321" y="267.33" width="2" height="4.67" fill="#c02030"/>
<rect x="327" y="266.66" width="2" height="5.34" fill="#c02030"/>
<rect x="333" y="267.79" width="2" height="4.21" fill="#c02030"/>
<rect x="339" y="269.09" width="2" height="2.91" fill="#c02030"/>
<rect x="345" y="269.09" width="2" height="2.91" fill="#c02030"/>
<rect x="351" y="269.09" width="2" height="2.91" fill="#c02030"/>
<rect x="357" y="270.75" width="2" height="1.25" fill="#c02030"/>
<rect x="363" y="270" width="2" height="3.04" fill="#c02030"/>
<rect x="369" y="270" width="2" height="3.1" fill="#c02030"/>
<rect x="375" y="270" width="2" height="3.1" fill="#c02030"/>
<rect x="381" y="270" width="2" height="3.1" fill="#c02030"/>
<rect x="387" y="270" width="2" height="1.69" fill="#c02030"/>
<rect x="393" y="269.51" width="2" height="2.49" fill="#c02030"/>
<rect x="399" y="267.81" width="2" height="4.19" fill="#c02030"/>
<rect x="405" y="266.13" width="2" height="5.87" fill="#c02030"/>
<rect x="411" y="265.71" width="2" height="6.29" fill="#c02030"/>
<rect x="417" y="265.35" width="2" height="6.65" fill="#c02030"/>
<rect x="423" y="265.32" width="2" height="6.68" fill="#c02030"/>
<rect x="429" y="265.34" width="2" height="6.66" fill="#c02030"/>
<rect x="435" y="265.58" width="2" height="6.42" fill="#c02030"/>
<rect x="441" y="266.54" width="2" height="5.46" fill="#c02030"/>
<rect x="447" y="267.31" width="2" height="4.69" fill="#c02030"/>
<rect x="453" y="269.64" width="2" height="2.36" fill="#c02030"/>
<rect x="459" y="270" width="2" height="3.04" fill="#c02030"/>
<rect x="465" y="270" width="2" height="5.35" fill="#c02030"/>
<rect x="471" y="270" width="2" height="6.85" fill="#c02030"/>
<rect x="477" y="270" width="2" height="6.85" fill="#c02030"/>
<rect x="483" y="270" width="2" height="7.02" fill="#c02030"/>
<rect x="489" y="270" width="2" height="6.88" fill="#c02030"/>
<rect x="495" y="270" width="2" height="6.47" fill="#c02030"/>
<rect x="501" y="270" width="2" height="6.21" fill="#c02030"/>
<rect x="507" y="270" width="2" height="5.95" fill="#c02030"/>
<rect x="513" y="270" width="2" height="5.43" fill="#c02030"/>
<rect x="519" y="270" width="2" height="4.27" fill="#c02030"/>
<rect x="525" y="270" width="2" height="3.1" fill="#c02030"/>
<rect x="531" y="270" width="2" height="3.95" fill="#c02030"/>
<rect x="537" y="270" width="2" height="5.65" fill="#c02030"/>
<rect x="543" y="270" width="2" height="8.06" fill="#c02030"/>
<rect x="549" y="270" width="2" height="9.67" fill="#c02030"/>
<rect x="555" y="270" width="2" height="8.88" fill="#c02030"/>
<rect x="561" y="270" width="2" height="8.12" fill="#c02030"/>
<rect x="567" y="270" width="2" height="8.29" fill="#c02030"/>
<rect x="573" y="270" width="2" height="8.71" fill="#c02030"/>
<rect x="579" y="270" width="2" height="9.07" fill="#c02030"/>
<rect x="585" y="270" width="2" height="9.06" fill="#c02030"/>
<rect x="591" y="270" width="2" height="8.81" fill="#c02030"/>
<rect x="597" y="270" width="2" height="8.65" fill="#c02030"/>
<rect x="603" y="270" width="2" height="8.49" fill="#c02030"/>
<rect x="609" y="270" width="2" height="8.3" fill="#c02030"/>
<rect x="615" y="270" width="2" height="8.13" fill="#c02030"/>
<rect x="621" y="270" width="2" height="7.83" fill="#c02030"/>
<rect x="627" y="270" width="2" height="6.79" fill="#c02030"/>
<rect x="633" y="270" width="2" height="5.99" fill="#c02030"/>
<rect x="639" y="270" width="2" height="5.87" fill="#c02030"/>
<rect x="645" y="270" width="2" height="6.25" fill="#c02030"/>
<rect x="651" y="270" width="2" height="6.52" fill="#c02030"/>
<rect x="657" y="270" width="2" height="6.33" fill="#c02030"/>
<rect x="663" y="270" width="2" height="6.77" fill="#c02030"/>
<rect x="669" y="270" width="2" height="6.44" fill="#c02030"/>
<rect x="675" y="270" width="2" height="5.25" fill="#c02030"/>
<rect x="681" y="270" width="2" height="3.96" fill="#c02030"/>
<rect x="687" y="270" width="2" height="1.95" fill="#c02030"/>
<rect x="693" y="269.98" width="2" height="2.02" fill="#c02030"/>
<rect x="699" y="268.63" width="2" height="3.37" fill="#c02030"/>
<rect x="705" y="267.36" width="2" height="4.64" fill="#c02030"/>
<rect x="711" y="268.72" width="2" height="3.28" fill="#c02030"/>
<rect x="717" y="269.92" width="2" height="2.08" fill="#c02030"/>
<rect x="723" y="269.47" width="2" height="2.53" fill="#c02030"/>
<rect x="729" y="268.91" width="2" height="3.09" fill="#c02030"/>
<rect x="735" y="269.55" width="2" height="2.45" fill="#c02030"/>
<rect x="741" y="270.55" width="2" height="1.45" fill="#c02030"/>
<rect x="747" y="268.9" width="2" height="3.1" fill="#c02030"/>
<rect x="753" y="269.81" width="2" height="2.19" fill="#c02030"/>
<rect x="759" y="270.72" width="2" height="1.28" fill="#c02030"/>
<rect x="765" y="269.49" width="2" height="2.51" fill="#c02030"/>
<rect x="771" y="268.9" width="2" height="3.1" fill="#c02030"/>
<rect x="777" y="268.9" width="2" height="3.1" fill="#c02030"/>
<rect x="783" y="268.9" width="2" height="3.1" fill="#c02030"/>
<rect x="789" y="268.97" width="2" height="3.03" fill="#c02030"/>
<rect x="795" y="270.43" width="2" height="1.57" fill="#c02030"/>
<rect x="801" y="270" width="2" height="2.29" fill="#c02030"/>
<rect x="807" y="270" width="2" height="3.65" fill="#c02030"/>
<rect x="813" y="270" width="2" height="4.15" fill="#c02030"/>
<rect x="819" y="270" width="2" height="2.45" fill="#c02030"/>
<rect x="825" y="267.71" width="2" height="4.29" fill="#c02030"/>
<rect x="831" y="264.65" width="2" height="7.35" fill="#c02030"/>
<rect x="837" y="261.87" width="2" height="10.13" fill="#c02030"/>
<polyline points="15,270.3 34,273 53,275 62.7,277 76,279 125.8,279 133.4,281.7 152.5,284.6 196.4,284.6 202,282.7 213.6,282.7 221.3,284.6 234.6,286.5 243.4,289 256.7,289 268.2,286.5 283.5,283.6 296.8,280.8 306.4,280.8 316,277 329.3,277 337,274 392.3,274 401.9,272.2 417.2,269.3 428.6,266.5 442,262.6 460.3,262.6 477.5,267.4 492.7,271.2 511.8,275 530.9,278.9 550,284.6 569.1,289.4 588.2,295 607.3,299.9 626.4,304.7 645.5,308.5 660,311.25 680.8,311.25 691.25,312.3 712,310.2 733,308.75 743,307 760,307 768,309 801.7,309 805.8,311.25 822.5,311.25 826.7,309 837,306 843.3,303" fill="none" stroke="#c42226" stroke-width="1.7" shape-rendering="geometricPrecision" />
<polyline points="15,272 39.8,276 57,279.8 87.6,279.8 91.4,279 125.8,279 135.3,286.5 152.5,288.4 164,284.6 196.4,284.6 198.3,282.7 213.6,282.7 221.3,287.5 234.6,290.3 245.3,290.3 260.6,286.5 281.6,279.8 296.8,277 316,274 331.2,272.2 352.2,272.2 363.7,276 382.8,276 392.3,273 405.7,266.5 421,262.6 436.3,258.8 445,257.9 456.5,262.6 469.8,271.2 487,276 511.8,279.8 527.1,279.8 534.8,283.6 548.1,293.2 563.4,295 582.5,301.8 603.5,306.6 620.7,310.4 636,311.3 650,315 666,317.5 680.8,314.4 697.5,310.2 703.75,307 718.3,309 728.75,307 743.3,307 747.5,305 760,307 789.2,307 801.7,310.2 810,315.4 820.4,312.3 826.7,305 837,296.7 843.3,292.5" fill="none" stroke="#267a26" stroke-width="1.6" shape-rendering="geometricPrecision" />
</g>
<rect x="17.5" y="256.5" width="883" height="65" fill="none" stroke="#aebfce" stroke-width="1.2"/>
<rect x="900" y="271" width="4" height="1" fill="#aebfce"/>
<text x="909" y="278" font-size="10.5" fill="#f2f2f2" stroke="#f2f2f2" stroke-width="0.25" textLength="33.5" lengthAdjust="spacingAndGlyphs">+0.000</text>
<text x="19" y="267.5" font-size="11" fill="#2a8a2a" textLength="28.5" lengthAdjust="spacingAndGlyphs">MACD</text>
<g clip-path="url(#rsiclip)">
<path d="M15,383 L15,363.2 L19.8,364 L27.4,358.4 L33.1,367 L48.4,366.6 L52.2,369 L58,377.5 L69.4,360.3 L76.1,363.2 L80.9,361.3 L87.6,361 L94.3,358.4 L99,359.4 L105.7,365 L110.5,362.2 L118.1,369 L123.9,373.7 L128.6,375 L128.6,383 Z" fill="url(#rsifill)" shape-rendering="geometricPrecision"/>
<path d="M134.4,383 L134.4,382.3 L141,371.8 L146.8,368.5 L152.5,370.5 L165.9,356.5 L171.6,365 L177.3,366 L188.8,360.3 L195.5,362.2 L201.2,365 L207,366 L213.6,377.5 L220.3,374.7 L226,374.7 L231.8,379.4 L237.6,370.5 L243.4,373.1 L249.1,361.3 L255.8,360.9 L265.3,354.6 L273.9,354.6 L285.4,359.4 L291.1,353.3 L297.8,360.3 L303.5,362.8 L309.3,353.3 L315,349.4 L321.7,360.3 L333.1,352.1 L338.9,354.6 L345.5,362.8 L351.3,363.2 L357,367.4 L363.7,360.3 L373.2,357.1 L381.8,366 L387.6,349.8 L394.2,343.1 L399,344.1 L405.7,341.2 L413.3,341.2 L418.1,343.1 L423.9,341.2 L429.6,351.4 L435.3,343.1 L444.9,346.4 L447.9,347 L452.6,355.6 L459.3,363.2 L465,370.8 L470.8,368.5 L477.5,365.5 L483.2,369.3 L488.9,366 L496.6,366 L501.3,364.2 L508,368.5 L513.8,367 L519.5,364.2 L525.2,368.5 L530.9,370.3 L530.9,383 Z" fill="url(#rsifill)" shape-rendering="geometricPrecision"/>
<path d="M554.8,383 L554.8,383 L561.5,374.3 L561.5,383 Z" fill="url(#rsifill)" shape-rendering="geometricPrecision"/>
<path d="M662,383 L662,383 L670.4,380.8 L675.6,374.6 L680.8,378.1 L687,379.2 L693.3,379.2 L699.6,371.25 L704.8,374.6 L704.8,383 Z" fill="url(#rsifill)" shape-rendering="geometricPrecision"/>
<path d="M716.25,383 L716.25,381.7 L724.6,375.4 L730.8,375 L741.25,381.25 L747.5,371.25 L747.5,383 Z" fill="url(#rsifill)" shape-rendering="geometricPrecision"/>
<path d="M762,383 L762,381.25 L770.4,380.8 L777.1,373.3 L782,375.5 L782,383 Z" fill="url(#rsifill)" shape-rendering="geometricPrecision"/>
<path d="M815.2,383 L815.2,383 L826.7,361.5 L832.9,355.8 L838.1,354.2 L842.9,356.25 L842.9,383 Z" fill="url(#rsifill)" shape-rendering="geometricPrecision"/>
</g>
<line x1="45.5" y1="327" x2="45.5" y2="401" stroke="#737d88" stroke-width="1" stroke-dasharray="3 3" stroke-dashoffset="0"/>
<line x1="81.5" y1="327" x2="81.5" y2="401" stroke="#737d88" stroke-width="1" stroke-dasharray="3 3" stroke-dashoffset="0"/>
<line x1="117.5" y1="327" x2="117.5" y2="401" stroke="#737d88" stroke-width="1" stroke-dasharray="3 3" stroke-dashoffset="0"/>
<line x1="153.5" y1="327" x2="153.5" y2="401" stroke="#737d88" stroke-width="1" stroke-dasharray="3 3" stroke-dashoffset="0"/>
<line x1="189.5" y1="327" x2="189.5" y2="401" stroke="#737d88" stroke-width="1" stroke-dasharray="3 3" stroke-dashoffset="0"/>
<line x1="225.5" y1="327" x2="225.5" y2="401" stroke="#737d88" stroke-width="1" stroke-dasharray="3 3" stroke-dashoffset="0"/>
<line x1="261.5" y1="327" x2="261.5" y2="401" stroke="#737d88" stroke-width="1" stroke-dasharray="3 3" stroke-dashoffset="0"/>
<line x1="297.5" y1="327" x2="297.5" y2="401" stroke="#737d88" stroke-width="1" stroke-dasharray="3 3" stroke-dashoffset="0"/>
<line x1="333.5" y1="327" x2="333.5" y2="401" stroke="#737d88" stroke-width="1" stroke-dasharray="3 3" stroke-dashoffset="0"/>
<line x1="369.5" y1="327" x2="369.5" y2="401" stroke="#737d88" stroke-width="1" stroke-dasharray="3 3" stroke-dashoffset="0"/>
<line x1="405.5" y1="327" x2="405.5" y2="401" stroke="#737d88" stroke-width="1" stroke-dasharray="3 3" stroke-dashoffset="0"/>
<line x1="441.5" y1="327" x2="441.5" y2="401" stroke="#737d88" stroke-width="1" stroke-dasharray="3 3" stroke-dashoffset="0"/>
<line x1="477.5" y1="327" x2="477.5" y2="401" stroke="#737d88" stroke-width="1" stroke-dasharray="3 3" stroke-dashoffset="0"/>
<line x1="513.5" y1="327" x2="513.5" y2="401" stroke="#737d88" stroke-width="1" stroke-dasharray="3 3" stroke-dashoffset="0"/>
<line x1="549.5" y1="327" x2="549.5" y2="401" stroke="#737d88" stroke-width="1" stroke-dasharray="3 3" stroke-dashoffset="0"/>
<line x1="585.5" y1="327" x2="585.5" y2="401" stroke="#737d88" stroke-width="1" stroke-dasharray="3 3" stroke-dashoffset="0"/>
<line x1="621.5" y1="327" x2="621.5" y2="401" stroke="#737d88" stroke-width="1" stroke-dasharray="3 3" stroke-dashoffset="0"/>
<line x1="657.5" y1="327" x2="657.5" y2="401" stroke="#737d88" stroke-width="1" stroke-dasharray="3 3" stroke-dashoffset="0"/>
<line x1="693.5" y1="327" x2="693.5" y2="401" stroke="#737d88" stroke-width="1" stroke-dasharray="3 3" stroke-dashoffset="0"/>
<line x1="729.5" y1="327" x2="729.5" y2="401" stroke="#737d88" stroke-width="1" stroke-dasharray="3 3" stroke-dashoffset="0"/>
<line x1="765.5" y1="327" x2="765.5" y2="401" stroke="#737d88" stroke-width="1" stroke-dasharray="3 3" stroke-dashoffset="0"/>
<line x1="801.5" y1="327" x2="801.5" y2="401" stroke="#737d88" stroke-width="1" stroke-dasharray="3 3" stroke-dashoffset="0"/>
<line x1="837.5" y1="327" x2="837.5" y2="401" stroke="#737d88" stroke-width="1" stroke-dasharray="3 3" stroke-dashoffset="0"/>
<line x1="873.5" y1="327" x2="873.5" y2="401" stroke="#737d88" stroke-width="1" stroke-dasharray="3 3" stroke-dashoffset="0"/>
<line x1="17" y1="356.5" x2="900" y2="356.5" stroke="#737d88" stroke-width="1" stroke-dasharray="3 3"/>
<line x1="837.5" y1="328" x2="837.5" y2="401" stroke="#8fa0b0" stroke-width="1"/>
<rect x="34" y="330" width="809" height="2" fill="#17199a"/>
<rect x="18" y="382" width="825" height="2" fill="#17199a"/>
<g clip-path="url(#rsiclip)">
<polyline points="15,363.2 19.8,364 27.4,358.4 33.1,367 48.4,366.6 52.2,369 58,377.5 69.4,360.3 76.1,363.2 80.9,361.3 87.6,361 94.3,358.4 99,359.4 105.7,365 110.5,362.2 118.1,369 123.9,373.7 128.6,375" fill="none" stroke="#e88a38" stroke-width="1.0" shape-rendering="geometricPrecision" />
<polyline points="128.6,375 134.4,382.3" fill="none" stroke="#30d030" stroke-width="1.0" shape-rendering="geometricPrecision" />
<polyline points="134.4,382.3 141,371.8 146.8,368.5 152.5,370.5 165.9,356.5 171.6,365 177.3,366 188.8,360.3 195.5,362.2 201.2,365 207,366 213.6,377.5 220.3,374.7 226,374.7 231.8,379.4 237.6,370.5 243.4,373.1 249.1,361.3 255.8,360.9 265.3,354.6 273.9,354.6 285.4,359.4 291.1,353.3 297.8,360.3 303.5,362.8 309.3,353.3 315,349.4 321.7,360.3 333.1,352.1 338.9,354.6 345.5,362.8 351.3,363.2 357,367.4 363.7,360.3 373.2,357.1 381.8,366 387.6,349.8 394.2,343.1 399,344.1 405.7,341.2 413.3,341.2 418.1,343.1 423.9,341.2 429.6,351.4 435.3,343.1 444.9,346.4 447.9,347 452.6,355.6 459.3,363.2 465,370.8 470.8,368.5 477.5,365.5 483.2,369.3 488.9,366 496.6,366 501.3,364.2 508,368.5 513.8,367 519.5,364.2 525.2,368.5 530.9,370.3" fill="none" stroke="#e88a38" stroke-width="1.0" shape-rendering="geometricPrecision" />
<polyline points="530.9,370.3 537.6,386.5 543.4,384.6 554.8,386.5" fill="none" stroke="#30d030" stroke-width="1.0" shape-rendering="geometricPrecision" />
<polyline points="554.8,386.5 561.5,374.3" fill="none" stroke="#e88a38" stroke-width="1.0" shape-rendering="geometricPrecision" />
<polyline points="561.5,374.3 567.2,382.3 574.9,386.5 585.4,385.2 593,388.4 597.8,388.4 603.5,385.2 609.2,393.4 615.9,389.6 621.7,392.2 627.4,389 634.1,383.8 641.7,388 662,398.3" fill="none" stroke="#30d030" stroke-width="1.0" shape-rendering="geometricPrecision" />
<polyline points="662,398.3 670.4,380.8 675.6,374.6 680.8,378.1 687,379.2 693.3,379.2 699.6,371.25 704.8,374.6" fill="none" stroke="#e88a38" stroke-width="1.0" shape-rendering="geometricPrecision" />
<polyline points="704.8,374.6 710,381.25 713,381.5" fill="none" stroke="#30d030" stroke-width="1.0" shape-rendering="geometricPrecision" />
<polyline points="716.25,381.7 724.6,375.4 730.8,375 741.25,381.25 747.5,371.25" fill="none" stroke="#e88a38" stroke-width="1.0" shape-rendering="geometricPrecision" />
<polyline points="747.5,371.25 752.7,379.6 757.9,381.25" fill="none" stroke="#30d030" stroke-width="1.0" shape-rendering="geometricPrecision" />
<polyline points="762,381.25 770.4,380.8 777.1,373.3 782,375.5" fill="none" stroke="#e88a38" stroke-width="1.0" shape-rendering="geometricPrecision" />
<polyline points="782,375.5 789.2,380.2 795.4,384.4 801.7,385.8 807.9,389.2 815.2,383.3" fill="none" stroke="#30d030" stroke-width="1.0" shape-rendering="geometricPrecision" />
<polyline points="815.2,383.3 826.7,361.5 832.9,355.8 838.1,354.2 842.9,356.25" fill="none" stroke="#e88a38" stroke-width="1.0" shape-rendering="geometricPrecision" />
</g>
<rect x="17.5" y="327.5" width="883" height="74" fill="none" stroke="#aebfce" stroke-width="1.2"/>
<rect x="900" y="356" width="4" height="1" fill="#aebfce"/>
<text x="908.5" y="362.5" font-size="10.5" fill="#f2f2f2" stroke="#f2f2f2" stroke-width="0.25" textLength="11.5" lengthAdjust="spacingAndGlyphs">50</text>
<text x="19.5" y="339.5" font-size="11" fill="#e8843a" stroke="#e8843a" stroke-width="0.2" textLength="14.5" lengthAdjust="spacingAndGlyphs">RSI</text>
<g shape-rendering="geometricPrecision">
<path d="M18.5 378.5 H84.5 Q86.5 378.5 86.5 380.5 V395.5 Q86.5 397.5 84.5 397.5 H18.5 Z" fill="#5c6b7f" stroke="#b4c4d2" stroke-width="1"/>
<text x="25" y="392.2" font-size="11.5" fill="#eef2f6" stroke="#eef2f6" stroke-width="0.25" textLength="55" lengthAdjust="spacingAndGlyphs">Июль 2020</text>
<path d="M838.5 378.5 H895.5 Q897.5 378.5 897.5 380.5 V395.5 Q897.5 397.5 895.5 397.5 H838.5 Z" fill="#5c6b7f" stroke="#b4c4d2" stroke-width="1"/>
<text x="846" y="392.2" font-size="11.5" fill="#eef2f6" stroke="#eef2f6" stroke-width="0.25" textLength="44.5" lengthAdjust="spacingAndGlyphs">Авг 2020</text>
</g>
<rect x="45" y="401" width="1" height="4" fill="#aebfce"/>
<rect x="81" y="401" width="1" height="4" fill="#aebfce"/>
<rect x="117" y="401" width="1" height="4" fill="#aebfce"/>
<rect x="153" y="401" width="1" height="4" fill="#aebfce"/>
<rect x="189" y="401" width="1" height="4" fill="#aebfce"/>
<rect x="225" y="401" width="1" height="4" fill="#aebfce"/>
<rect x="261" y="401" width="1" height="4" fill="#aebfce"/>
<rect x="297" y="401" width="1" height="4" fill="#aebfce"/>
<rect x="333" y="401" width="1" height="4" fill="#aebfce"/>
<rect x="369" y="401" width="1" height="4" fill="#aebfce"/>
<rect x="405" y="401" width="1" height="4" fill="#aebfce"/>
<rect x="441" y="401" width="1" height="4" fill="#aebfce"/>
<rect x="477" y="401" width="1" height="4" fill="#aebfce"/>
<rect x="513" y="401" width="1" height="4" fill="#aebfce"/>
<rect x="549" y="401" width="1" height="4" fill="#aebfce"/>
<rect x="585" y="401" width="1" height="4" fill="#aebfce"/>
<rect x="621" y="401" width="1" height="4" fill="#aebfce"/>
<rect x="657" y="401" width="1" height="4" fill="#aebfce"/>
<rect x="693" y="401" width="1" height="4" fill="#aebfce"/>
<rect x="729" y="401" width="1" height="4" fill="#aebfce"/>
<rect x="765" y="401" width="1" height="4" fill="#aebfce"/>
<rect x="801" y="401" width="1" height="4" fill="#aebfce"/>
<rect x="837" y="401" width="1" height="4" fill="#aebfce"/>
<rect x="873" y="401" width="1" height="4" fill="#aebfce"/>
<rect x="17" y="378" width="2" height="27" fill="#c8e0e0"/>
<rect x="837" y="378" width="1.5" height="27" fill="#c8dede"/>
<text x="44.6" y="424" font-size="11" fill="#f2f2f2" stroke="#f2f2f2" stroke-width="0.3" text-anchor="middle">2</text>
<text x="80.6" y="424" font-size="11" fill="#f2f2f2" stroke="#f2f2f2" stroke-width="0.3" text-anchor="middle">3</text>
<text x="116.6" y="424" font-size="11" fill="#f2f2f2" stroke="#f2f2f2" stroke-width="0.3" text-anchor="middle">6</text>
<text x="152.6" y="424" font-size="11" fill="#f2f2f2" stroke="#f2f2f2" stroke-width="0.3" text-anchor="middle">7</text>
<text x="188.6" y="424" font-size="11" fill="#f2f2f2" stroke="#f2f2f2" stroke-width="0.3" text-anchor="middle">8</text>
<text x="224.6" y="424" font-size="11" fill="#f2f2f2" stroke="#f2f2f2" stroke-width="0.3" text-anchor="middle">9</text>
<text x="260.6" y="424" font-size="11" fill="#f2f2f2" stroke="#f2f2f2" stroke-width="0.3" text-anchor="middle">10</text>
<text x="296.6" y="424" font-size="11" fill="#f2f2f2" stroke="#f2f2f2" stroke-width="0.3" text-anchor="middle">13</text>
<text x="332.6" y="424" font-size="11" fill="#f2f2f2" stroke="#f2f2f2" stroke-width="0.3" text-anchor="middle">14</text>
<text x="368.6" y="424" font-size="11" fill="#f2f2f2" stroke="#f2f2f2" stroke-width="0.3" text-anchor="middle">15</text>
<text x="404.6" y="424" font-size="11" fill="#f2f2f2" stroke="#f2f2f2" stroke-width="0.3" text-anchor="middle">16</text>
<text x="440.6" y="424" font-size="11" fill="#f2f2f2" stroke="#f2f2f2" stroke-width="0.3" text-anchor="middle">17</text>
<text x="476.6" y="424" font-size="11" fill="#f2f2f2" stroke="#f2f2f2" stroke-width="0.3" text-anchor="middle">20</text>
<text x="512.6" y="424" font-size="11" fill="#f2f2f2" stroke="#f2f2f2" stroke-width="0.3" text-anchor="middle">21</text>
<text x="548.6" y="424" font-size="11" fill="#f2f2f2" stroke="#f2f2f2" stroke-width="0.3" text-anchor="middle">22</text>
<text x="584.6" y="424" font-size="11" fill="#f2f2f2" stroke="#f2f2f2" stroke-width="0.3" text-anchor="middle">23</text>
<text x="620.6" y="424" font-size="11" fill="#f2f2f2" stroke="#f2f2f2" stroke-width="0.3" text-anchor="middle">24</text>
<text x="656.6" y="424" font-size="11" fill="#f2f2f2" stroke="#f2f2f2" stroke-width="0.3" text-anchor="middle">27</text>
<text x="692.6" y="424" font-size="11" fill="#f2f2f2" stroke="#f2f2f2" stroke-width="0.3" text-anchor="middle">28</text>
<text x="728.6" y="424" font-size="11" fill="#f2f2f2" stroke="#f2f2f2" stroke-width="0.3" text-anchor="middle">29</text>
<text x="764.6" y="424" font-size="11" fill="#f2f2f2" stroke="#f2f2f2" stroke-width="0.3" text-anchor="middle">30</text>
<text x="800.6" y="424" font-size="11" fill="#f2f2f2" stroke="#f2f2f2" stroke-width="0.3" text-anchor="middle">31</text>
<text x="836.6" y="424" font-size="11" fill="#f2f2f2" stroke="#f2f2f2" stroke-width="0.3" text-anchor="middle">3</text>
<text x="872.6" y="424" font-size="11" fill="#f2f2f2" stroke="#f2f2f2" stroke-width="0.3" text-anchor="middle">4</text>
</svg></body></html>
